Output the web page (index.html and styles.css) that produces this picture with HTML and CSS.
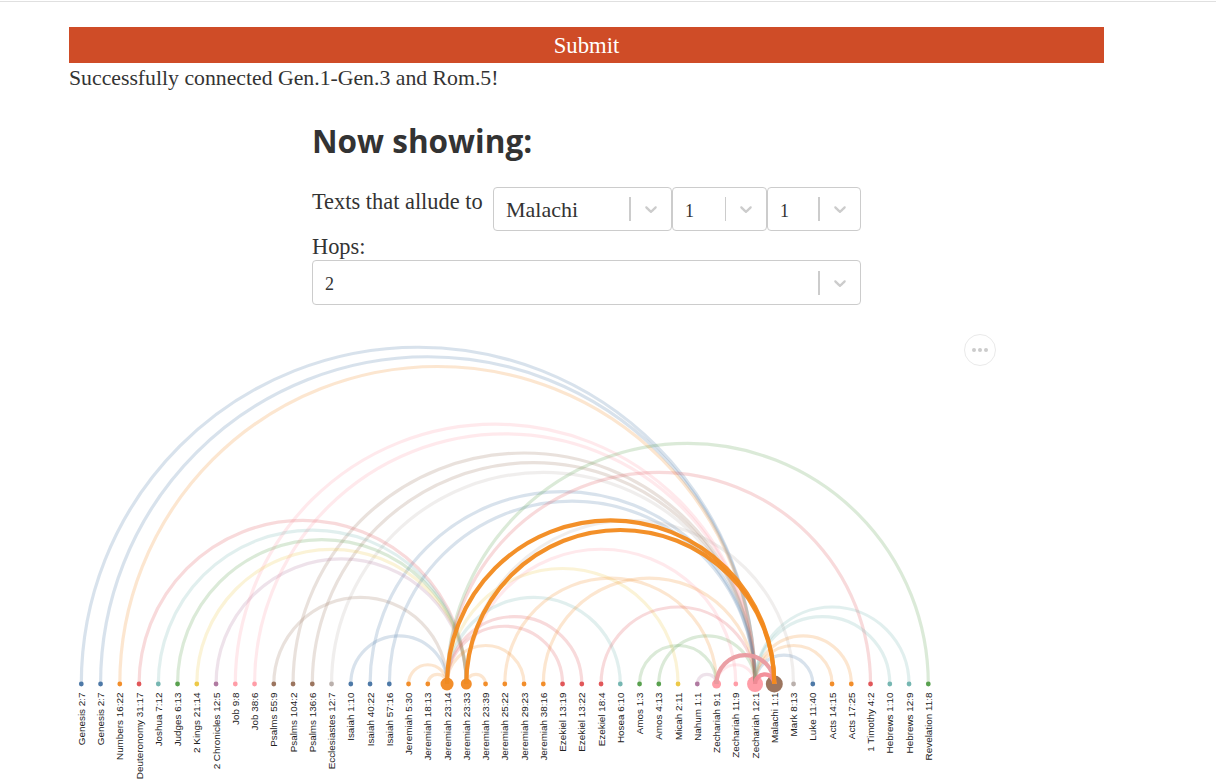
FILE: index.html
```
<!DOCTYPE html>
<html>
  <head>
    <meta charset="utf-8">
    <title>Now showing</title>
    <link rel="stylesheet" href="styles.css">
  </head>
  <body>
    <div class="top-rule"></div>
    <div class="page">
      <button class="submit">Submit</button>
      <p class="message">Successfully connected Gen.1-Gen.3 and Rom.5!</p>
      <div class="filters">
        <h2>Now showing:</h2>
        <div class="allude-row">
          <label class="allude-label">Texts that allude to</label>
          <div class="select select-book">
            <span class="select-value">Malachi</span>
            <span class="select-sep"></span>
            <svg class="chevron" viewBox="0 0 20 20"><path d="M4.516 7.548c0.436-0.446 1.043-0.481 1.576 0l3.908 3.747 3.908-3.747c0.533-0.481 1.141-0.446 1.574 0 0.436 0.445 0.408 1.197 0 1.615-0.406 0.418-4.695 4.502-4.695 4.502-0.217 0.223-0.502 0.335-0.787 0.335s-0.57-0.112-0.789-0.335c0 0-4.287-4.084-4.695-4.502s-0.436-1.17 0-1.615z"></path></svg>
          </div>
          <div class="select select-num">
            <span class="select-value select-digit">1</span>
            <span class="select-sep sep-thin"></span>
            <svg class="chevron" viewBox="0 0 20 20"><path d="M4.516 7.548c0.436-0.446 1.043-0.481 1.576 0l3.908 3.747 3.908-3.747c0.533-0.481 1.141-0.446 1.574 0 0.436 0.445 0.408 1.197 0 1.615-0.406 0.418-4.695 4.502-4.695 4.502-0.217 0.223-0.502 0.335-0.787 0.335s-0.57-0.112-0.789-0.335c0 0-4.287-4.084-4.695-4.502s-0.436-1.17 0-1.615z"></path></svg>
          </div>
          <div class="select select-num">
            <span class="select-value select-digit">1</span>
            <span class="select-sep"></span>
            <svg class="chevron" viewBox="0 0 20 20"><path d="M4.516 7.548c0.436-0.446 1.043-0.481 1.576 0l3.908 3.747 3.908-3.747c0.533-0.481 1.141-0.446 1.574 0 0.436 0.445 0.408 1.197 0 1.615-0.406 0.418-4.695 4.502-4.695 4.502-0.217 0.223-0.502 0.335-0.787 0.335s-0.57-0.112-0.789-0.335c0 0-4.287-4.084-4.695-4.502s-0.436-1.17 0-1.615z"></path></svg>
          </div>
        </div>
        <label class="hops-label">Hops:</label>
        <div class="select select-hops">
          <span class="select-value select-digit">2</span>
          <span class="select-sep"></span>
          <svg class="chevron" viewBox="0 0 20 20"><path d="M4.516 7.548c0.436-0.446 1.043-0.481 1.576 0l3.908 3.747 3.908-3.747c0.533-0.481 1.141-0.446 1.574 0 0.436 0.445 0.408 1.197 0 1.615-0.406 0.418-4.695 4.502-4.695 4.502-0.217 0.223-0.502 0.335-0.787 0.335s-0.57-0.112-0.789-0.335c0 0-4.287-4.084-4.695-4.502s-0.436-1.17 0-1.615z"></path></svg>
        </div>
      </div>
      <div class="chart-wrap">
        <svg id="chart" class="chart" width="1035" height="469"></svg>
        <div class="more-btn"><span></span><span></span><span></span></div>
      </div>
    </div>
    <script src="chart.js"></script>
  </body>
</html>
```
FILE: styles.css
```
html, body {
  margin: 0;
  padding: 0;
  background: #fff;
  color: #333;
  font-family: "Liberation Serif", serif;
  overflow: hidden;
}
.top-rule {
  margin-top: 1px;
  height: 1px;
  background: #e0e0e0;
}
.page {
  width: 1035px;
  margin-left: 69px;
  padding-top: 25px;
}
.submit {
  display: block;
  width: 100%;
  height: 36px;
  border: 0;
  padding: 2px 0 0;
  background: #cf4c27;
  color: #fff;
  font-family: inherit;
  font-size: 22.7px;
}
.message {
  margin: 0;
  font-size: 21.75px;
  line-height: 30px;
}
.filters {
  width: 549px;
  margin: 0 auto;
  font-size: 22.4px;
}
.filters h2 {
  margin: 26px 0 0;
  font-family: "Open Sans", sans-serif;
  font-size: 31.5px;
  font-weight: 700;
  line-height: 44px;
}
.allude-row {
  display: flex;
  margin-top: 24px;
}
.allude-label {
  width: 171px;
  margin-right: 10px;
  line-height: 30px;
}
.hops-label {
  display: block;
  line-height: 31px;
  margin-bottom: -2px;
}
.select {
  box-sizing: border-box;
  display: flex;
  align-items: center;
  height: 44px;
  border: 1px solid #ccc;
  border-radius: 4px;
  background: #fff;
}
.select-book { width: 179px; }
.select-num { width: 95px; }
.select-num:last-child { width: 94px; }
.select-hops { height: 45px; }
.select-value {
  flex: 1;
  padding: 2px 0 0 12px;
  font-size: 22px;
}
.select-digit {
  padding-top: 4px;
  font-size: 18px;
}
.select-sep {
  width: 2px;
  height: 24px;
  background: #ccc;
}
.sep-thin {
  width: 1px;
}
.chevron {
  width: 20px;
  height: 20px;
  margin: 0 10px;
  fill: #ccc;
}
.chart-wrap {
  position: relative;
  margin-top: 12px;
}
.chart {
  display: block;
}
.arc {
  fill: none;
  stroke-width: 3.2;
  opacity: 0.22;
}
.arc-on {
  stroke-width: 4.2;
  opacity: 0.95;
}
.label {
  font-family: "Liberation Sans", sans-serif;
  font-size: 9.9px;
  fill: #222;
}
.more-btn {
  position: absolute;
  top: 17px;
  left: 895px;
  box-sizing: border-box;
  width: 32px;
  height: 32px;
  border: 1px solid #eaeaea;
  border-radius: 50%;
  display: flex;
  align-items: center;
  justify-content: center;
  gap: 2px;
}
.more-btn span {
  width: 4px;
  height: 4px;
  border-radius: 50%;
  background: #ccc;
}
```
FILE: chart.js
```
// arc diagram: verses along a line, allusions as half circles
var colors = {
  blue: '#4e79a7', orange: '#f28e2b', red: '#e15759', teal: '#76b7b2', green: '#59a14f',
  yellow: '#edc948', purple: '#b07aa1', pink: '#ff9da7', brown: '#9c755f', gray: '#bab0ac',
  rose: '#ea9aa0', rose2: '#f28a96', amber: '#f28a1e'
};

var nodes = [
  ['Genesis 2:7', 'blue'], ['Genesis 2:7', 'blue'], ['Numbers 16:22', 'orange'],
  ['Deuteronomy 31:17', 'red'], ['Joshua 7:12', 'teal'], ['Judges 6:13', 'green'],
  ['2 Kings 21:14', 'yellow'], ['2 Chronicles 12:5', 'purple'], ['Job 9:8', 'pink'],
  ['Job 38:6', 'pink'], ['Psalms 55:9', 'brown'], ['Psalms 104:2', 'brown'],
  ['Psalms 136:6', 'brown'], ['Ecclesiastes 12:7', 'gray'], ['Isaiah 1:10', 'blue'],
  ['Isaiah 40:22', 'blue'], ['Isaiah 57:16', 'blue'], ['Jeremiah 5:30', 'orange'],
  ['Jeremiah 18:13', 'orange'], ['Jeremiah 23:14', 'orange', 6.5], ['Jeremiah 23:33', 'orange', 5.5],
  ['Jeremiah 23:39', 'orange'], ['Jeremiah 25:22', 'orange'], ['Jeremiah 29:23', 'orange'],
  ['Jeremiah 38:16', 'orange'], ['Ezekiel 13:19', 'red'], ['Ezekiel 13:22', 'red'],
  ['Ezekiel 18:4', 'red'], ['Hosea 6:10', 'teal'], ['Amos 1:3', 'green'], ['Amos 4:13', 'green'],
  ['Micah 2:11', 'yellow'], ['Nahum 1:1', 'purple'], ['Zechariah 9:1', 'pink', 4.5],
  ['Zechariah 11:9', 'pink'], ['Zechariah 12:1', 'pink', 8], ['Malachi 1:1', 'brown', 8.5],
  ['Mark 8:13', 'gray'], ['Luke 11:40', 'blue'], ['Acts 14:15', 'orange'], ['Acts 17:25', 'orange'],
  ['1 Timothy 4:2', 'red'], ['Hebrews 1:10', 'teal'], ['Hebrews 12:9', 'teal'], ['Revelation 11:8', 'green']
];

// [from, to, color]
var links = [
  [0, 35, 'blue'], [1, 35, 'blue'], [2, 35, 'orange'], [8, 35, 'pink'], [9, 35, 'pink'],
  [11, 35, 'brown'], [12, 35, 'brown'], [13, 35, 'gray'], [15, 35, 'blue'], [16, 35, 'blue'],
  [3, 20, 'red'], [4, 20, 'teal'], [5, 20, 'green'], [6, 20, 'yellow'], [7, 20, 'purple'],
  [10, 19, 'brown'], [14, 19, 'blue'], [17, 19, 'orange'], [18, 19, 'orange'],
  [19, 44, 'green'], [19, 41, 'red'], [20, 34, 'pink'], [20, 37, 'gray'], [19, 31, 'yellow'],
  [20, 21, 'orange'], [19, 23, 'orange'], [19, 25, 'red'], [19, 26, 'red'], [19, 28, 'teal'],
  [22, 33, 'orange'], [24, 35, 'orange'], [27, 35, 'red'], [29, 33, 'green'], [30, 35, 'green'],
  [32, 33, 'purple'], [33, 35, 'pink'], [35, 38, 'blue'], [35, 39, 'orange'], [35, 40, 'orange'],
  [35, 42, 'teal'], [35, 43, 'teal'],
  [33, 36, 'rose', true], [35, 36, 'rose2', true], [20, 36, 'amber', true], [19, 36, 'amber', true]
];

var NS = 'http://www.w3.org/2000/svg';
var svg = document.getElementById('chart');
var baseY = 367, startX = 12.3, stepX = 19.25;

function make(tag, attrs, parent) {
  var el = document.createElementNS(NS, tag);
  for (var k in attrs) el.setAttribute(k, attrs[k]);
  parent.appendChild(el);
  return el;
}

function xOf(i) {
  return startX + i * stepX;
}

nodes.forEach(function(n, i) {
  make('circle', {cx: xOf(i), cy: baseY, r: n[2] || 2.4, fill: colors[n[1]]}, svg);
  var x = xOf(i) + 3.5, y = baseY + 8.5;
  var t = make('text', {'class': 'label', x: x, y: y, 'text-anchor': 'end', transform: 'rotate(-90 ' + x + ' ' + y + ')'}, svg);
  t.textContent = n[0];
});

links.forEach(function(l) {
  var a = xOf(l[0]), b = xOf(l[1]), r = (b - a) / 2;
  make('path', {
    'class': l[3] ? 'arc arc-on' : 'arc',
    stroke: colors[l[2]],
    d: 'M' + a + ' ' + baseY + ' A' + r + ' ' + r + ' 0 0 1 ' + b + ' ' + baseY
  }, svg);
});
```
